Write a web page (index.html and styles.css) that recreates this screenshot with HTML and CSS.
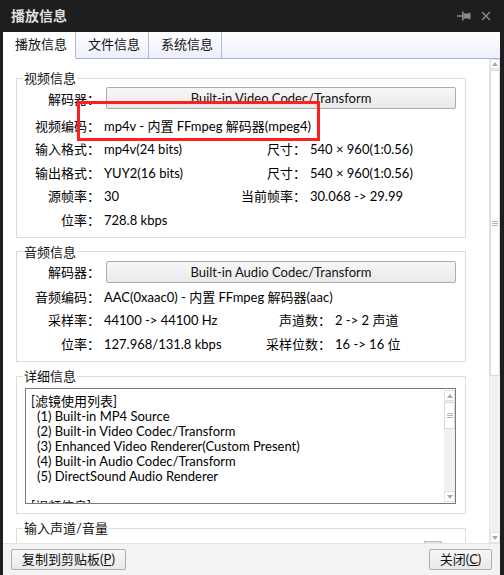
FILE: index.html
```html
<!DOCTYPE html>
<html lang="zh-CN">
<head>
<meta charset="utf-8">
<title>播放信息</title>
<link rel="stylesheet" href="styles.css">
</head>
<body>
<div class="window">
  <div class="titlebar">
    <span class="title">播放信息</span>
    <div class="title-icons">
      <svg class="pin" width="14" height="10" viewBox="0 0 14 10">
        <line x1="0" y1="5" x2="5" y2="5" stroke="#8d8d8d" stroke-width="1.4"/>
        <rect x="5" y="0.5" width="1.6" height="9" fill="#8d8d8d"/>
        <rect x="6.6" y="2.5" width="6.4" height="5" fill="#8d8d8d"/>
        <rect x="12.2" y="1.5" width="1.3" height="7" fill="#8d8d8d"/>
      </svg>
      <svg class="close" width="10" height="10" viewBox="0 0 10 10">
        <path d="M1 1 L9 9 M9 1 L1 9" stroke="#8d8d8d" stroke-width="1.4" fill="none"/>
      </svg>
    </div>
  </div>
  <div class="panel">
    <div class="tabs">
      <div class="tab active">播放信息</div>
      <div class="tab">文件信息</div>
      <div class="tab">系统信息</div>
      <div class="tab-fill"></div>
    </div>
    <div class="content">
      <div class="main">
        <fieldset class="group">
          <legend>视频信息</legend>
          <div class="decoder-row">
            <span class="lab">解码器：</span>
            <div class="btn codec">Built-in Video Codec/Transform</div>
          </div>
          <div class="rows rows-video">
            <div class="row"><span class="lab">视频编码：</span><span class="val">mp4v - 内置 FFmpeg 解码器(mpeg4)</span></div>
            <div class="row"><span class="lab">输入格式：</span><span class="val v1">mp4v(24 bits)</span><span class="lab2">尺寸：</span><span class="val">540 × 960(1:0.56)</span></div>
            <div class="row"><span class="lab">输出格式：</span><span class="val v1">YUY2(16 bits)</span><span class="lab2">尺寸：</span><span class="val">540 × 960(1:0.56)</span></div>
            <div class="row"><span class="lab">源帧率：</span><span class="val v1">30</span><span class="lab2">当前帧率：</span><span class="val">30.068 -&gt; 29.99</span></div>
            <div class="row"><span class="lab">位率：</span><span class="val">728.8 kbps</span></div>
          </div>
        </fieldset>

        <fieldset class="group">
          <legend>音频信息</legend>
          <div class="decoder-row">
            <span class="lab">解码器：</span>
            <div class="btn codec">Built-in Audio Codec/Transform</div>
          </div>
          <div class="rows rows-audio">
            <div class="row"><span class="lab">音频编码：</span><span class="val">AAC(0xaac0) - 内置 FFmpeg 解码器(aac)</span></div>
            <div class="row"><span class="lab">采样率：</span><span class="val v1a">44100 -&gt; 44100 Hz</span><span class="lab2">声道数：</span><span class="val">2 -&gt; 2 声道</span></div>
            <div class="row"><span class="lab">位率：</span><span class="val v1a">127.968/131.8 kbps</span><span class="lab2">采样位数：</span><span class="val">16 -&gt; 16 位</span></div>
          </div>
        </fieldset>

        <fieldset class="group detail">
          <legend>详细信息</legend>
          <div class="textbox">
            <div class="textbox-text">
              <div class="line">[滤镜使用列表]</div>
              <div class="line item">(1) Built-in MP4 Source</div>
              <div class="line item">(2) Built-in Video Codec/Transform</div>
              <div class="line item">(3) Enhanced Video Renderer(Custom Present)</div>
              <div class="line item">(4) Built-in Audio Codec/Transform</div>
              <div class="line item">(5) DirectSound Audio Renderer</div>
              <div class="line">&nbsp;</div>
              <div class="line">[视频信息]</div>
            </div>
            <div class="sbar small">
              <div class="sb-btn"><span class="arrow up"></span></div>
              <div class="sb-thumb small-thumb"><span class="grip"></span></div>
              <div class="sb-track"></div>
              <div class="sb-btn"><span class="arrow down"></span></div>
            </div>
          </div>
        </fieldset>

        <fieldset class="group last">
          <legend>输入声道/音量</legend>
          <div class="vol-row"><div class="vol-knob"></div></div>
        </fieldset>
      </div>
      <div class="sbar main-sbar">
        <div class="sb-btn"><span class="arrow up"></span></div>
        <div class="sb-thumb big-thumb"><span class="grip"></span></div>
        <div class="sb-track"></div>
        <div class="sb-btn"><span class="arrow down"></span></div>
      </div>
    </div>
    <div class="bottombar">
      <div class="btn bottom-btn copy">复制到剪贴板(<u>P</u>)</div>
      <div class="btn bottom-btn close-btn">关闭(<u>C</u>)</div>
    </div>
  </div>
  <div class="highlight"></div>
</div>
</body>
</html>
```

FILE: styles.css
```css
* { box-sizing: border-box; }
html, body { margin: 0; padding: 0; }
body {
  width: 504px;
  height: 575px;
  overflow: hidden;
  background: #1e1e1e;
  font-family: Lato, "Noto Sans CJK SC", sans-serif;
  font-size: 13px;
  color: #000;
}
.window {
  position: relative;
  width: 504px;
  height: 575px;
  background: #1e1e1e;
  display: flex;
  flex-direction: column;
}
.titlebar {
  height: 32px;
  flex: none;
  display: flex;
  align-items: center;
  justify-content: space-between;
  padding: 0 13px 0 11px;
}
.title {
  color: #dedede;
  font-size: 14px;
  font-weight: bold;
  line-height: 16px;
}
.title-icons {
  display: flex;
  align-items: center;
  gap: 10px;
}
.title-icons svg { display: block; }

.panel {
  flex: 1;
  margin: 0 4px 0 3px;
  display: flex;
  flex-direction: column;
  min-height: 0;
}
.tabs {
  height: 27px;
  flex: none;
  display: flex;
  background: linear-gradient(#ffffff, #eceefb);
}
.tab {
  height: 27px;
  padding: 0 8px 0 12px;
  line-height: 25px;
  border-right: 1px solid #b4bbd6;
  border-bottom: 1px solid #a9b0d0;
  color: #111;
  white-space: nowrap;
}
.tab.active {
  background: #fff;
  border-bottom-color: #fff;
}
.tab-fill {
  flex: 1;
  border-bottom: 1px solid #a9b0d0;
}

.content {
  flex: 1;
  display: flex;
  background: #fff;
  min-height: 0;
  overflow: hidden;
}
.main {
  flex: 1;
  padding: 11px 0 0 13px;
  overflow: hidden;
}

.group {
  width: 450px;
  margin: 0 0 6px 0;
  padding: 0 9px 5px 0;
  border: 1px solid #dcdcdc;
  min-width: 0;
}
.group legend {
  margin-left: 6px;
  padding: 0 1px;
  line-height: 16px;
  color: #111;
}
.decoder-row {
  display: flex;
  align-items: center;
  margin-top: 1px;
}
.lab {
  width: 83px;
  flex: none;
  text-align: right;
  white-space: nowrap;
}
.decoder-row .btn { margin-left: 6px; }
.btn {
  border: 1px solid #adadad;
  border-radius: 2px;
  background: linear-gradient(#f7f7f7, #e9e9e9);
  text-align: center;
  color: #111;
  white-space: nowrap;
}
.codec {
  flex: 1;
  height: 22px;
  line-height: 20px;
}
.rows-video { margin-top: 6px; }
.rows-audio { margin-top: 3px; }
.row {
  display: flex;
  height: 23.4px;
  line-height: 23.4px;
  white-space: nowrap;
}
.val { margin-left: 4px; }
.v1 { width: 102px; flex: none; }
.v1a { width: 127px; flex: none; }
.lab2 {
  width: 100px;
  flex: none;
  text-align: right;
}

.detail { padding-bottom: 9px; }
.textbox {
  margin: 4px 0 0 8px;
  height: 116px;
  border: 1px solid #7a7a7a;
  display: flex;
  overflow: hidden;
}
.textbox-text {
  flex: 1;
  padding: 5px 0 0 5px;
  overflow: hidden;
}
.line {
  line-height: 15px;
  height: 15px;
  white-space: nowrap;
}
.line.item { padding-left: 6px; }

.sbar {
  width: 11px;
  flex: none;
  display: flex;
  flex-direction: column;
  background: #f1f1f1;
}
.sbar.small { margin: 1px 0 1px 0; }
.sb-btn {
  height: 11px;
  flex: none;
  background: #fff;
  border: 1px solid #e1e1e1;
  display: flex;
  align-items: center;
  justify-content: center;
}
.sb-thumb {
  flex: none;
  margin-top: 1px;
  background: #fff;
  border: 1px solid #d8d8d8;
  display: flex;
  align-items: center;
  justify-content: center;
}
.small-thumb { height: 27px; }
.big-thumb { height: 306px; }
.sb-track { flex: 1; }
.grip {
  display: block;
  width: 6px;
  height: 5px;
  border-top: 1px solid #b4b4b4;
  border-bottom: 1px solid #b4b4b4;
  background: linear-gradient(transparent 1px, #b4b4b4 1px, #b4b4b4 2px, transparent 2px);
}
.arrow {
  display: block;
  width: 0;
  height: 0;
  border-left: 3px solid transparent;
  border-right: 3px solid transparent;
}
.arrow.up { border-bottom: 4px solid #a9a9a9; }
.arrow.down { border-top: 4px solid #a9a9a9; }

.main-sbar {
  border-left: 1px solid #e6e6e6;
}
.main-sbar .sb-btn { height: 10px; }
.main-sbar .sb-btn:last-child { height: 11px; }

.last { padding-bottom: 0; }
.vol-row {
  display: flex;
  justify-content: flex-end;
  padding: 5px 14px 0 0;
}
.vol-knob {
  width: 18px;
  height: 20px;
  border: 1px solid #bdbdbd;
  background: #e4e4e4;
}

.bottombar {
  height: 32px;
  flex: none;
  background: #f3f3f3;
  border-top: 1px solid #e2e2e2;
  display: flex;
  justify-content: space-between;
  align-items: flex-start;
  padding: 5px 8px 0 8px;
}
.bottom-btn {
  height: 21px;
  line-height: 19px;
}
.copy { width: 115px; }
.close-btn { width: 63px; }
.bottom-btn u { text-underline-offset: 1px; }

.highlight {
  position: absolute;
  left: 77px;
  top: 101px;
  width: 243px;
  height: 40px;
  border: 3px solid #ff1f1f;
  pointer-events: none;
}
```
